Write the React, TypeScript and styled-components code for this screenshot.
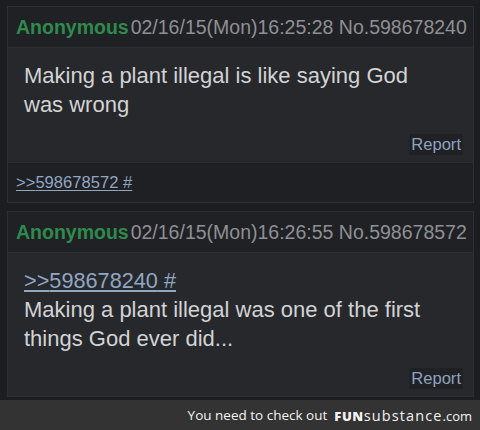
import React from 'react';
import styled, {createGlobalStyle} from 'styled-components';

const GlobalStyle = createGlobalStyle`
  html, body {
    margin: 0;
    padding: 0;
    background: #1c1d20;
  }
  body {
    font-family: "Liberation Sans", Arial, sans-serif;
  }
`;

type Post = {
  time: string;
  no: string;
  quote?: string;
  lines: string;
  backlink?: string;
};

const POSTS: Post[] = [
  {
    time: '02/16/15(Mon)16:25:28',
    no: '598678240',
    lines: 'Making a plant illegal is like saying God was wrong',
    backlink: '598678572',
  },
  {
    time: '02/16/15(Mon)16:26:55',
    no: '598678572',
    quote: '598678240',
    lines: 'Making a plant illegal was one of the first things God ever did...',
  },
];

const Page = styled.div`
  width: 480px;
  height: 430px;
  display: flex;
  flex-direction: column;
  overflow: hidden;
`;

const Thread = styled.div`
  flex: 1;
  display: flex;
  flex-direction: column;
  gap: 8px;
  padding: 6px 6px 0 7px;
`;

const Card = styled.div`
  border: 1px solid #2e2f33;
  background: #27282c;
  display: flex;
  flex-direction: column;
`;

const Header = styled.div`
  height: 40px;
  display: flex;
  align-items: center;
  padding: 0 8px;
  background: #202124;
  border-bottom: 1px solid #2c2d31;
  white-space: nowrap;
`;

const Name = styled.span`
  color: #2f8a4d;
  font-weight: bold;
  font-size: 19.5px;
`;

const Meta = styled.span`
  color: #8f9094;
  font-size: 19.5px;
  margin-left: 2px;
`;

const Body = styled.div`
  padding: 13px 26px 0 16px;
  color: #d2d3d5;
  font-size: 22px;
  line-height: 29px;
`;

const QuoteLink = styled.a<{$small?: boolean}>`
  color: #90a6c2;
  text-decoration: underline;
  text-underline-offset: 2px;
  font-size: ${p => (p.$small ? '16.6px' : '21.7px')};
  display: block;
`;

const ReportRow = styled.div`
  display: flex;
  justify-content: flex-end;
  padding: 15px 10px 7px;
`;

const Report = styled.span`
  color: #8fa3bf;
  font-size: 16.6px;
  line-height: 19px;
  background: #1f2125;
  padding: 1px 2px;
`;

const Backlinks = styled.div`
  height: 39px;
  display: flex;
  align-items: center;
  padding: 0 8px;
  background: #1f2023;
  border-top: 1px solid #2c2d31;
`;

const Footer = styled.div`
  height: 30px;
  background: #333333;
  display: flex;
  align-items: center;
  justify-content: flex-end;
  padding-right: 8px;
  color: #f2f2f2;
  font-family: "Open Sans", "Noto Sans", sans-serif;
  font-size: 13.5px;
`;

const Brand = styled.span`
  margin-left: 7px;
  display: flex;
  align-items: baseline;
  font-family: "Open Sans", sans-serif;
`;

const Fun = styled.b`
  font-weight: 800;
  font-size: 13px;
  letter-spacing: 0.6px;
`;

const Substance = styled.span`
  font-size: 14.5px;
  letter-spacing: 1.1px;
`;

const Dotcom = styled.span`
  font-size: 13px;
`;

function PostCard({post}: {post: Post}) {
  return (
    <Card>
      <Header>
        <Name>Anonymous</Name>
        <Meta>
          {post.time} No.{post.no}
        </Meta>
      </Header>
      <Body>
        {post.quote ? <QuoteLink>&gt;&gt;{post.quote} #</QuoteLink> : null}
        {post.lines}
      </Body>
      <ReportRow>
        <Report>Report</Report>
      </ReportRow>
      {post.backlink ? (
        <Backlinks>
          <QuoteLink $small>&gt;&gt;{post.backlink} #</QuoteLink>
        </Backlinks>
      ) : null}
    </Card>
  );
}

function App() {
  return (
    <Page>
      <GlobalStyle />
      <Thread>
        {POSTS.map(p => (
          <PostCard key={p.no} post={p} />
        ))}
      </Thread>
      <Footer>
        You need to check out
        <Brand>
          <Fun>FUN</Fun>
          <Substance>substance</Substance>
          <Dotcom>.com</Dotcom>
        </Brand>
      </Footer>
    </Page>
  );
}

export default App;
